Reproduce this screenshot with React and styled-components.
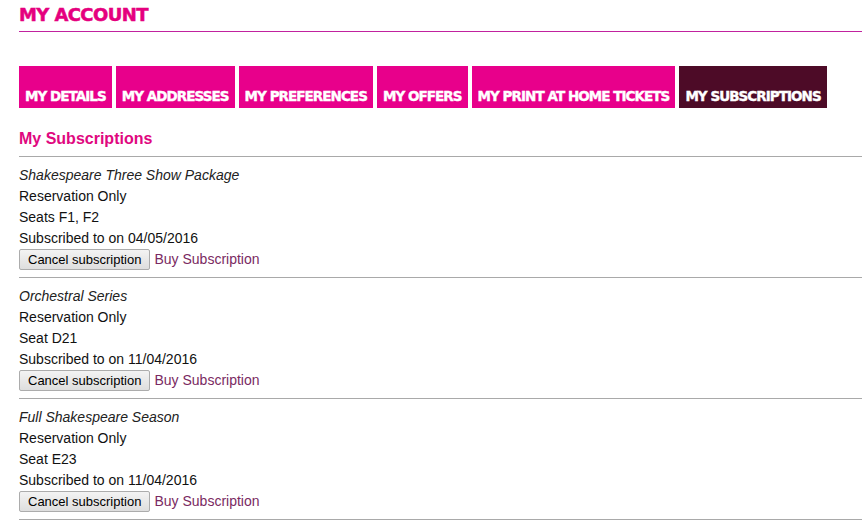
import styled, { createGlobalStyle } from "styled-components";

const GlobalStyle = createGlobalStyle`
  body {
    margin: 0;
    background: #fff;
    font-family: "Liberation Sans", Arial, sans-serif;
    color: #000;
  }
`;

const Page = styled.div`
  padding-left: 19px;
`;

const Title = styled.h1`
  margin: 0;
  padding-top: 4px;
  height: 31px;
  box-sizing: border-box;
  font-family: "DejaVu Sans", sans-serif;
  font-weight: bold;
  font-size: 18px;
  line-height: 22px;
  text-transform: uppercase;
  letter-spacing: -0.6px;
  -webkit-text-stroke: 0.5px #e5007e;
  color: #e5007e;
`;

const Rule = styled.div`
  height: 1px;
  background: #c1229f;
`;

const Tabs = styled.div`
  display: flex;
  gap: 4px;
  margin-top: 34px;
`;

const Tab = styled.div`
  height: 42px;
  display: flex;
  align-items: flex-end;
  padding: 0 6px 4px;
  box-sizing: border-box;
  background: ${(p) => (p.$active ? "#4d0b27" : "#e8008b")};
  color: #fff;
  font-family: "DejaVu Sans", sans-serif;
  font-weight: bold;
  font-size: 13.5px;
  letter-spacing: -0.95px;
  -webkit-text-stroke: 0.4px #fff;
  text-transform: uppercase;
  white-space: nowrap;
`;

const Section = styled.h2`
  margin: 0;
  padding-top: 21px;
  height: 49px;
  box-sizing: border-box;
  font-size: 16px;
  line-height: 20px;
  font-weight: bold;
  color: #e0087f;
  border-bottom: 1px solid #a9a9a9;
`;

const Entry = styled.div`
  padding: 8px 0 7px;
  border-bottom: 1px solid #a9a9a9;
  font-size: 14px;
  line-height: 21px;
`;

const Name = styled.div`
  font-style: italic;
  color: #222;
`;

const Line = styled.div`
  color: #111;
`;

const Actions = styled.div`
  display: flex;
  align-items: center;
  gap: 4px;
  height: 21px;
`;

const Button = styled.button`
  height: 21px;
  padding: 0 8px;
  font-family: "Liberation Sans", Arial, sans-serif;
  font-size: 13px;
  color: #000;
  background: linear-gradient(#f3f3f3, #dedede);
  border: 1px solid #acacac;
  border-radius: 2px;
`;

const Link = styled.a`
  color: #7a2a62;
  text-decoration: none;
  font-size: 14px;
`;

const tabs = [
  "My Details",
  "My Addresses",
  "My Preferences",
  "My Offers",
  "My Print at Home Tickets",
  "My Subscriptions",
];

const subs = [
  { name: "Shakespeare Three Show Package", seats: "Seats F1, F2", date: "04/05/2016" },
  { name: "Orchestral Series", seats: "Seat D21", date: "11/04/2016" },
  { name: "Full Shakespeare Season", seats: "Seat E23", date: "11/04/2016" },
];

export default function App() {
  return (
    <Page>
      <GlobalStyle />
      <Title>My Account</Title>
      <Rule />
      <Tabs>
        {tabs.map((t) => (
          <Tab key={t} $active={t === "My Subscriptions"}>
            {t}
          </Tab>
        ))}
      </Tabs>
      <Section>My Subscriptions</Section>
      {subs.map((s) => (
        <Entry key={s.name}>
          <Name>{s.name}</Name>
          <Line>Reservation Only</Line>
          <Line>{s.seats}</Line>
          <Line>Subscribed to on {s.date}</Line>
          <Actions>
            <Button>Cancel subscription</Button>
            <Link href="#">Buy Subscription</Link>
          </Actions>
        </Entry>
      ))}
    </Page>
  );
}
